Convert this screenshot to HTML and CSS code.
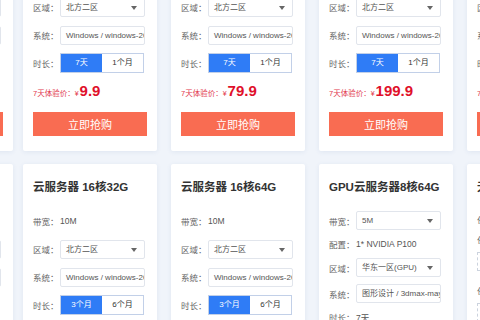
FILE: index.html
```html
<!DOCTYPE html>
<html lang="zh-CN">
<head>
  <meta charset="UTF-8" />
  <meta name="viewport" content="width=device-width, initial-scale=1.0" />
  <title>云服务器 - 限时抢购</title>
  <link rel="stylesheet" href="styles.css">
</head>
<body>
  <div class="list">
    <!-- 第一排 -->
    <div class="card peek">
      <h3 class="title">云服务器 2核4G</h3>
      <div class="rows">
        <div class="row"><span class="label">带宽：</span><span class="val">5M</span></div>
        <div class="row"><span class="label">区域：</span><div class="field select">北方二区<i class="caret"></i></div></div>
        <div class="row"><span class="label">系统：</span><div class="field">Windows / windows-2012 数据中心版</div></div>
        <div class="row"><span class="label">时长：</span><div class="toggle"><span class="on">7天</span><span>1个月</span></div></div>
      </div>
      <p class="price">7天体验价：<small>¥</small><b>1.9</b></p>
      <button class="buy">立即抢购</button>
    </div>

    <div class="card">
      <h3 class="title">云服务器 4核8G</h3>
      <div class="rows">
        <div class="row"><span class="label">带宽：</span><span class="val">5M</span></div>
        <div class="row"><span class="label">区域：</span><div class="field select">北方二区<i class="caret"></i></div></div>
        <div class="row"><span class="label">系统：</span><div class="field">Windows / windows-2012 数据中心版</div></div>
        <div class="row"><span class="label">时长：</span><div class="toggle"><span class="on">7天</span><span>1个月</span></div></div>
      </div>
      <p class="price">7天体验价：<small>¥</small><b>9.9</b></p>
      <button class="buy">立即抢购</button>
    </div>

    <div class="card">
      <h3 class="title">云服务器 8核16G</h3>
      <div class="rows">
        <div class="row"><span class="label">带宽：</span><span class="val">10M</span></div>
        <div class="row"><span class="label">区域：</span><div class="field select">北方二区<i class="caret"></i></div></div>
        <div class="row"><span class="label">系统：</span><div class="field">Windows / windows-2012 数据中心版</div></div>
        <div class="row"><span class="label">时长：</span><div class="toggle"><span class="on">7天</span><span>1个月</span></div></div>
      </div>
      <p class="price">7天体验价：<small>¥</small><b>79.9</b></p>
      <button class="buy">立即抢购</button>
    </div>

    <div class="card">
      <h3 class="title">云服务器 16核32G</h3>
      <div class="rows">
        <div class="row"><span class="label">带宽：</span><span class="val">10M</span></div>
        <div class="row"><span class="label">区域：</span><div class="field select">北方二区<i class="caret"></i></div></div>
        <div class="row"><span class="label">系统：</span><div class="field">Windows / windows-2012 数据中心版</div></div>
        <div class="row"><span class="label">时长：</span><div class="toggle"><span class="on">7天</span><span>1个月</span></div></div>
      </div>
      <p class="price">7天体验价：<small>¥</small><b>199.9</b></p>
      <button class="buy">立即抢购</button>
    </div>

    <div class="card">
      <h3 class="title">云服务器 32核64G</h3>
      <div class="rows">
        <div class="row"><span class="label">带宽：</span><span class="val">20M</span></div>
        <div class="row"><span class="label">区域：</span><div class="field select">北方二区<i class="caret"></i></div></div>
        <div class="row"><span class="label">系统：</span><div class="field">Windows / windows-2012 数据中心版</div></div>
        <div class="row"><span class="label">时长：</span><div class="toggle"><span class="on">7天</span><span>1个月</span></div></div>
      </div>
      <p class="price">7天体验价：<small>¥</small><b>299.9</b></p>
      <button class="buy">立即抢购</button>
    </div>

    <!-- 第二排 -->
    <div class="card peek">
      <h3 class="title">云服务器 8核32G</h3>
      <div class="rows">
        <div class="row"><span class="label">带宽：</span><span class="val">10M</span></div>
        <div class="row"><span class="label">区域：</span><div class="field select">北方二区<i class="caret"></i></div></div>
        <div class="row"><span class="label">系统：</span><div class="field">Windows / windows-2012 数据中心版</div></div>
        <div class="row"><span class="label">时长：</span><div class="toggle"><span class="on">3个月</span><span>6个月</span></div></div>
      </div>
      <p class="price">3个月价：<small>¥</small><b>999</b></p>
      <button class="buy">立即抢购</button>
    </div>

    <div class="card">
      <h3 class="title">云服务器 16核32G</h3>
      <div class="rows">
        <div class="row"><span class="label">带宽：</span><span class="val">10M</span></div>
        <div class="row"><span class="label">区域：</span><div class="field select">北方二区<i class="caret"></i></div></div>
        <div class="row"><span class="label">系统：</span><div class="field">Windows / windows-2012 数据中心版</div></div>
        <div class="row"><span class="label">时长：</span><div class="toggle"><span class="on">3个月</span><span>6个月</span></div></div>
      </div>
      <p class="price">3个月价：<small>¥</small><b>1999</b></p>
      <button class="buy">立即抢购</button>
    </div>

    <div class="card">
      <h3 class="title">云服务器 16核64G</h3>
      <div class="rows">
        <div class="row"><span class="label">带宽：</span><span class="val">10M</span></div>
        <div class="row"><span class="label">区域：</span><div class="field select">北方二区<i class="caret"></i></div></div>
        <div class="row"><span class="label">系统：</span><div class="field">Windows / windows-2012 数据中心版</div></div>
        <div class="row"><span class="label">时长：</span><div class="toggle"><span class="on">3个月</span><span>6个月</span></div></div>
      </div>
      <p class="price">3个月价：<small>¥</small><b>2999</b></p>
      <button class="buy">立即抢购</button>
    </div>

    <div class="card">
      <h3 class="title">GPU云服务器8核64G</h3>
      <div class="rows gpu">
        <div class="row"><span class="label">带宽：</span><div class="field select">5M<i class="caret"></i></div></div>
        <div class="row text"><span class="label">配置：</span><span class="val">1* NVIDIA P100</span></div>
        <div class="row"><span class="label">区域：</span><div class="field select">华东一区(GPU)<i class="caret"></i></div></div>
        <div class="row"><span class="label">系统：</span><div class="field">图形设计 / 3dmax-maya渲染版</div></div>
        <div class="row text"><span class="label">时长：</span><span class="val">7天</span></div>
      </div>
      <p class="price">7天体验价：<small>¥</small><b>99</b></p>
      <button class="buy">立即抢购</button>
    </div>

    <div class="card">
      <h3 class="title">无服务器GPU</h3>
      <div class="rows upload">
        <div class="line">任务类型：渲染</div>
        <div class="line">任务文件：</div>
        <div class="drop"></div>
        <div class="line">任务参数：</div>
        <div class="drop"></div>
      </div>
    </div>
  </div>
</body>
</html>
```

FILE: styles.css
```css
* {
  box-sizing: border-box;
  font-family: 'Liberation Sans', 'Noto Sans CJK SC', sans-serif;
}
body {
  margin: 0;
  background: #f0f4fa;
  overflow: hidden;
}
.list {
  display: grid;
  grid-template-columns: repeat(5, 134px);
  gap: 13px 14px;
  margin: -78px 0 0 -125px;
}
.card {
  background: #fff;
  height: 229px;
  padding: 14px 10px 0 10px;
  border-radius: 2px;
  box-shadow: 0 1px 5px rgba(60, 90, 150, 0.09);
}
/* 左侧露出一半的卡片 */
.card.peek {
  margin: 0 -4px 0 4px;
}
.title {
  margin: 0;
  font-size: 11.5px;
  line-height: 18px;
  font-weight: bold;
  color: #333;
  white-space: nowrap;
}
.rows {
  display: flex;
  flex-direction: column;
  gap: 8px;
  margin-top: 15px;
}
.row {
  display: flex;
  align-items: center;
  height: 20px;
}
.rows.gpu {
  gap: 7px;
}
.rows.gpu .row {
  height: 19px;
}
.rows.gpu .row.text {
  height: 14px;
}
.label {
  width: 27px;
  flex: none;
  font-size: 8.5px;
  color: #666;
  white-space: nowrap;
}
.val {
  font-size: 8.5px;
  color: #555;
}
.field {
  position: relative;
  width: 85px;
  height: 19px;
  padding: 0 5px;
  border: 1px solid #e1e5ec;
  border-radius: 2px;
  font-size: 8px;
  line-height: 17px;
  color: #555;
  white-space: nowrap;
  overflow: hidden;
}
.caret {
  position: absolute;
  right: 7px;
  top: 7px;
  width: 0;
  height: 0;
  border-left: 3px solid transparent;
  border-right: 3px solid transparent;
  border-top: 4px solid #666;
}
.toggle {
  display: flex;
  width: 84px;
  height: 20px;
  border: 1px solid #c2d0e8;
}
.toggle span {
  flex: 1;
  text-align: center;
  font-size: 8px;
  line-height: 18px;
  color: #333;
}
.toggle .on {
  background: #2f7cf6;
  color: #fff;
}
.price {
  margin: 7px 0 0;
  height: 22px;
  line-height: 22px;
  font-size: 7.5px;
  color: #e23a4e;
  white-space: nowrap;
}
.price small {
  font-size: 7px;
  margin-right: 1px;
}
.price b {
  font-size: 15px;
  color: #e0102a;
}
.buy {
  display: block;
  width: 114px;
  height: 24px;
  margin-top: 10px;
  border: none;
  background: #f96c52;
  color: #fff;
  font-size: 11px;
}
.upload {
  gap: 0;
  margin-top: 14px;
}
.line {
  height: 20px;
  line-height: 20px;
  font-size: 8.5px;
  color: #666;
  white-space: nowrap;
}
.drop {
  width: 110px;
  height: 19px;
  margin: 2px 0 10px;
  border: 1px dashed #ccd3de;
}
```
